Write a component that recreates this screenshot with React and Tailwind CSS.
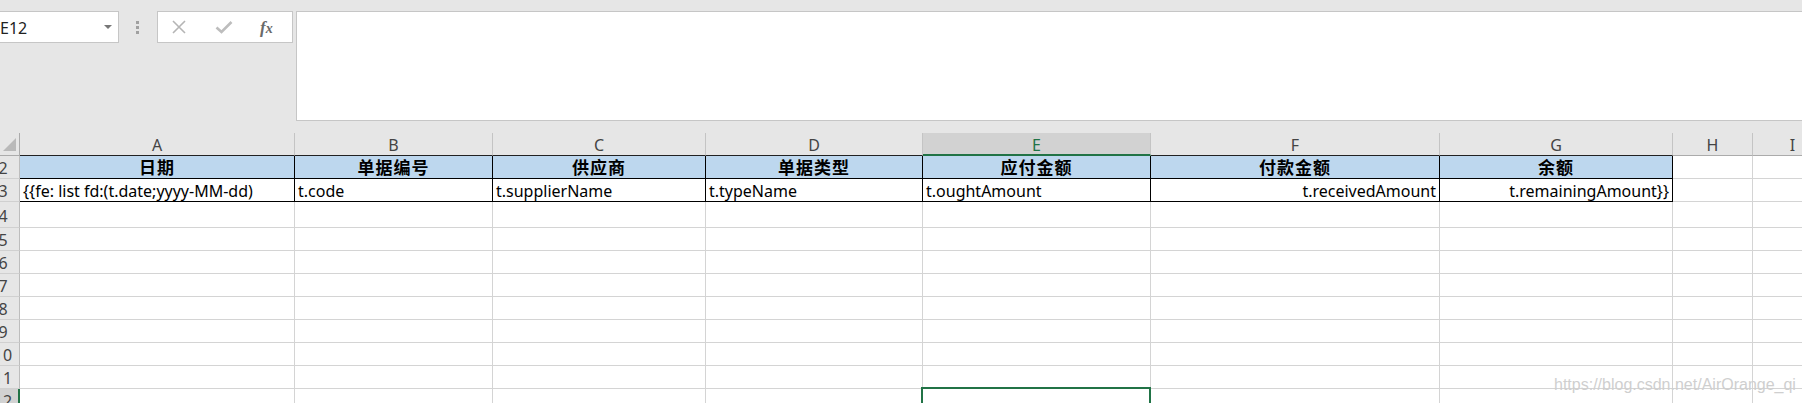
import React from 'react';

const COLS = [
  { id: 'A', w: 'w-[275px]', head: '日期', val: '{{fe: list fd:(t.date;yyyy-MM-dd)', boxed: true },
  { id: 'B', w: 'w-[198px]', head: '单据编号', val: 't.code', boxed: true },
  { id: 'C', w: 'w-[213px]', head: '供应商', val: 't.supplierName', boxed: true },
  { id: 'D', w: 'w-[217px]', head: '单据类型', val: 't.typeName', boxed: true },
  { id: 'E', w: 'w-[228px]', head: '应付金额', val: 't.oughtAmount', boxed: true, active: true },
  { id: 'F', w: 'w-[289px]', head: '付款金额', val: 't.receivedAmount', boxed: true, right: true },
  { id: 'G', w: 'w-[233px]', head: '余额', val: 't.remainingAmount}}', boxed: true, right: true },
  { id: 'H', w: 'w-[80px]' },
  { id: 'I', w: 'w-[80px]' },
];

// row number -> height (incl. bottom gridline)
const ROWS = [
  { n: 2, h: 'h-[23px]' },
  { n: 3, h: 'h-[23px]' },
  { n: 4, h: 'h-[26px]' },
  { n: 5, h: 'h-[23px]' },
  { n: 6, h: 'h-[23px]' },
  { n: 7, h: 'h-[23px]' },
  { n: 8, h: 'h-[23px]' },
  { n: 9, h: 'h-[23px]' },
  { n: 10, h: 'h-[23px]' },
  { n: 11, h: 'h-[23px]' },
  { n: 12, h: 'h-[23px]' },
];

const RowLabel = ({ n }) => {
  const selected = n === 12;
  return (
    <div
      className={`w-[20px] shrink-0 overflow-hidden border-b border-[#d0d0d0] flex items-center ${
        selected ? 'bg-[#d2d2d2] border-r-2 border-r-[#217346]' : 'bg-[#e6e6e6] border-r border-r-[#bdbdbd]'
      }`}
    >
      <div className="w-[34px] -ml-[14px] shrink-0 text-center text-[16px] leading-none text-[#444] pt-[2px]">{n}</div>
    </div>
  );
};

const DataCell = ({ col, row }) => {
  const inTable = col.boxed && (row === 2 || row === 3);
  const border = inTable ? 'border-r border-b border-black' : 'border-r border-b border-[#d4d4d4]';

  if (row === 2 && col.head) {
    return (
      <div className={`${col.w} shrink-0 ${border} bg-[#bdd7ee] flex items-center justify-center`}>
        <span className="font-bold text-[17px] leading-none text-black tracking-[1px] pt-[1px]">{col.head}</span>
      </div>
    );
  }

  if (row === 3 && col.val) {
    return (
      <div className={`${col.w} shrink-0 ${border} flex items-center overflow-hidden whitespace-nowrap ${col.right ? 'justify-end pr-[3px]' : 'pl-[3px]'}`}>
        <span className="text-[16px] leading-none text-black pt-[1px]">{col.val}</span>
      </div>
    );
  }

  const selected = row === 12 && col.active;
  return (
    <div className={`${col.w} shrink-0 ${border} relative`}>
      {selected && <div className="absolute -top-[2px] -left-[2px] -right-[1px] -bottom-[4px] border-2 border-[#217346]" />}
    </div>
  );
};

const Toolbar = () => (
  <div className="h-[133px] bg-[#e6e6e6] flex items-start pt-[11px] shrink-0">
    {/* Name box */}
    <div className="-ml-[5px] w-[124px] h-[32px] shrink-0 border border-[#c6c6c6] bg-white flex items-center justify-between pl-[4px] pr-[6px]">
      <span className="text-[16px] leading-none text-[#222] pt-[1px]">E12</span>
      <span className="w-0 h-0 border-l-[4px] border-r-[4px] border-t-[4px] border-l-transparent border-r-transparent border-t-[#777]" />
    </div>

    {/* grip */}
    <div className="ml-[17px] mt-[10px] flex flex-col gap-[2px]">
      <span className="w-[3px] h-[3px] bg-[#a0a0a0]" />
      <span className="w-[3px] h-[3px] bg-[#a0a0a0]" />
      <span className="w-[3px] h-[3px] bg-[#a0a0a0]" />
    </div>

    {/* cancel / enter / fx */}
    <div className="ml-[18px] w-[136px] h-[32px] shrink-0 border border-[#c6c6c6] bg-white flex items-center pl-[13px]">
      <svg width="16" height="16" viewBox="0 0 16 16" className="shrink-0">
        <path d="M2 2 L14 14 M14 2 L2 14" stroke="#b5b5b5" strokeWidth="1.6" fill="none" />
      </svg>
      <svg width="18" height="14" viewBox="0 0 18 14" className="ml-[28px] shrink-0">
        <path d="M1.5 7.5 L6.5 12 L16.5 2" stroke="#bdbdbd" strokeWidth="2.6" fill="none" />
      </svg>
      <span className="ml-[27px] font-['Liberation_Serif',serif] italic font-bold text-[17px] leading-none text-[#6a6a6a]">
        f<span className="text-[14px]">x</span>
      </span>
    </div>

    {/* formula bar */}
    <div className="ml-[3px] flex-1 -mr-[2px] h-[110px] border border-[#c6c6c6] bg-white" />
  </div>
);

export default function App() {
  return (
    <div className="relative w-[1802px] h-[403px] overflow-hidden bg-white flex flex-col font-['Noto_Sans','Noto_Sans_CJK_SC',sans-serif]">
      <Toolbar />

      {/* column headers */}
      <div className="flex h-[23px] shrink-0">
        <div className="w-[20px] shrink-0 bg-[#e6e6e6] border-r border-b border-[#ababab] relative">
          <svg width="20" height="22" viewBox="0 0 20 22" className="absolute left-0 top-0">
            <polygon points="16,5 16,18 3,18" fill="#b9b9b9" />
          </svg>
        </div>
        {COLS.map((c) => (
          <div
            key={c.id}
            className={`${c.w} shrink-0 flex items-center justify-center border-r border-r-[#c4c4c4] text-[16px] leading-none ${
              c.active
                ? 'bg-[#d2d2d2] border-b-2 border-b-[#217346] text-[#217346]'
                : c.boxed
                ? 'bg-[#e6e6e6] border-b border-b-[#222] text-[#444]'
                : 'bg-[#e6e6e6] border-b border-b-[#ababab] text-[#444]'
            }`}
          >
            <span className="pt-[2px]">{c.id}</span>
          </div>
        ))}
      </div>

      {/* rows */}
      {ROWS.map((r) => (
        <div key={r.n} className={`flex ${r.h} shrink-0`}>
          <RowLabel n={r.n} />
          {COLS.map((c) => (
            <DataCell key={c.id} col={c} row={r.n} />
          ))}
        </div>
      ))}

      {/* watermark */}
      <div className="absolute left-[1554px] top-[377px] font-['Liberation_Sans',sans-serif] text-[16px] leading-none text-[#cfcfcf]">
        https://blog.csdn.net/AirOrange_qi
      </div>
    </div>
  );
}
